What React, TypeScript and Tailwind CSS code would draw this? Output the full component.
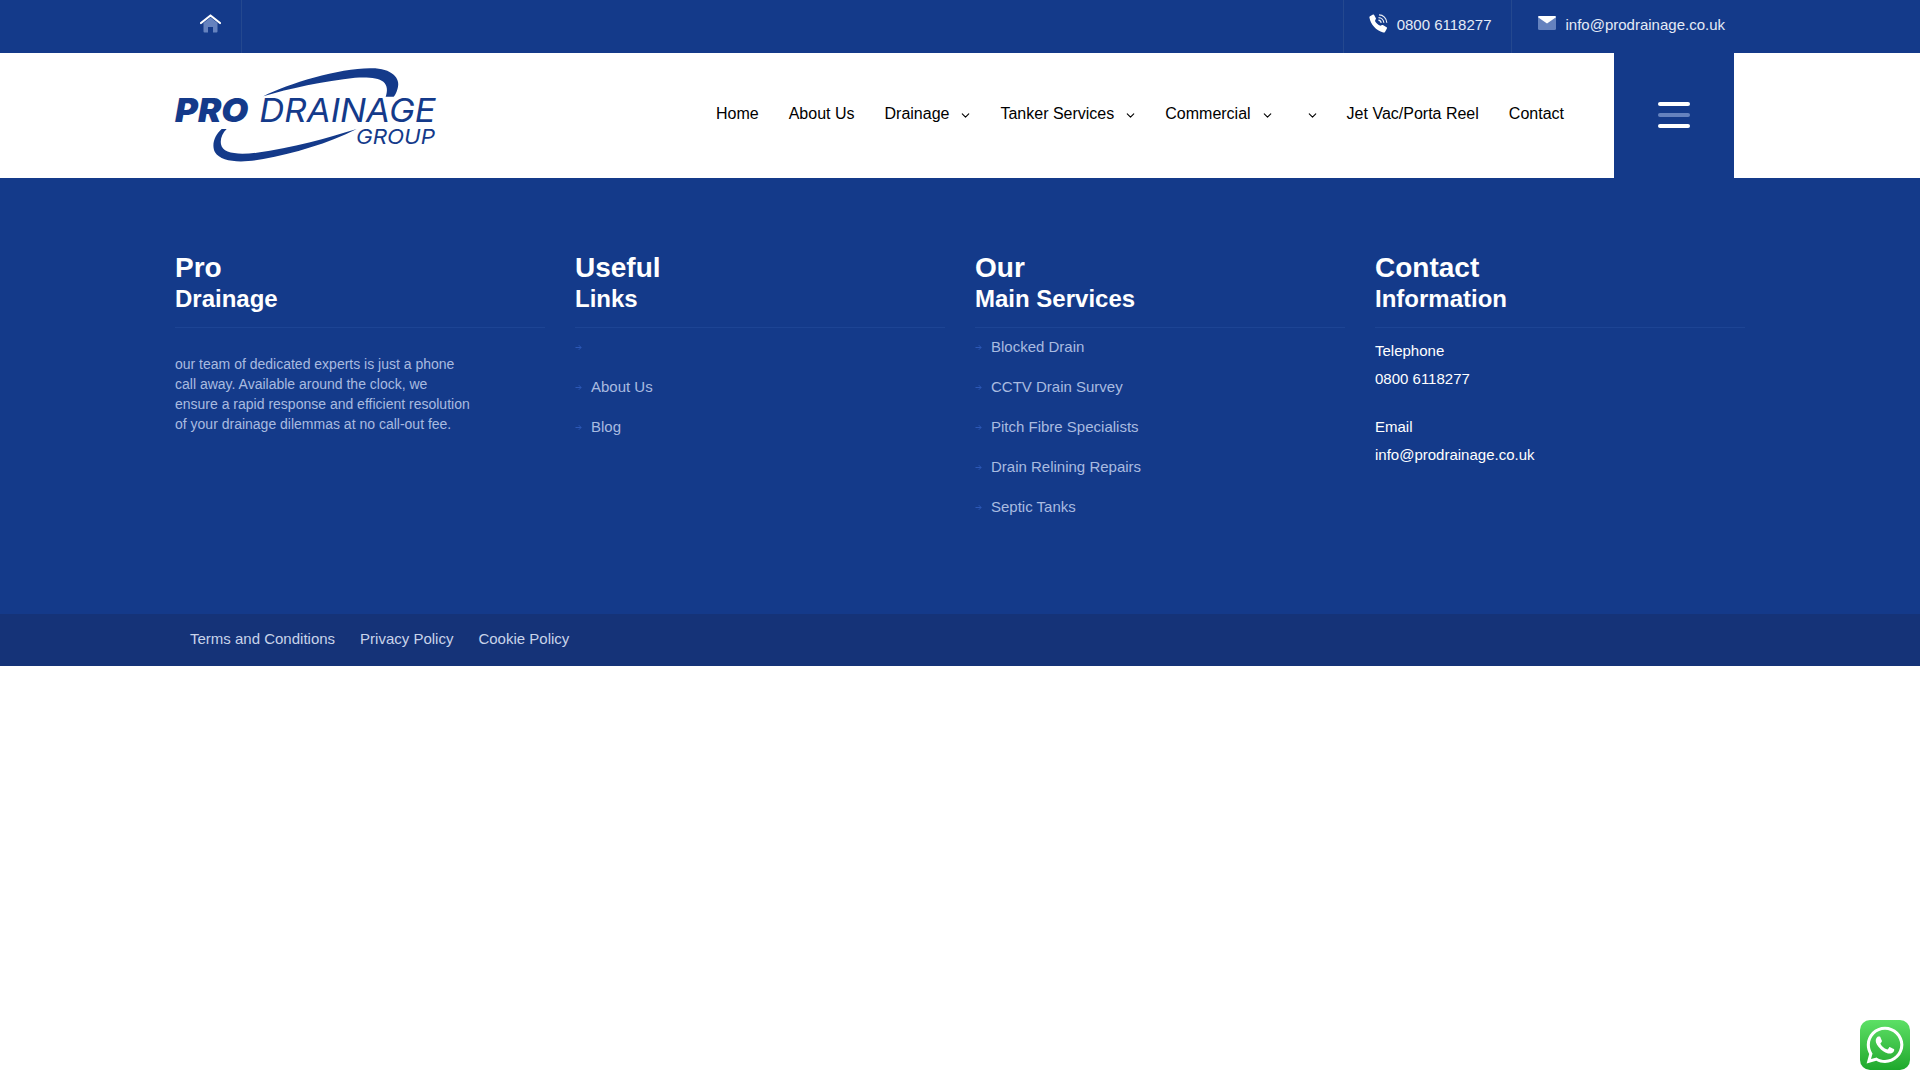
import { ChevronDown } from 'lucide-react';
import { FaWhatsapp } from 'react-icons/fa';

const NAV = [
  { label: 'Home', drop: false },
  { label: 'About Us', drop: false },
  { label: 'Drainage', drop: true },
  { label: 'Tanker Services', drop: true },
  { label: 'Commercial', drop: true },
  { label: '', drop: true },
  { label: 'Jet Vac/Porta Reel', drop: false },
  { label: 'Contact', drop: false },
];

const USEFUL = ['', 'About Us', 'Blog'];
const SERVICES = ['Blocked Drain', 'CCTV Drain Survey', 'Pitch Fibre Specialists', 'Drain Relining Repairs', 'Septic Tanks'];
const LEGAL = ['Terms and Conditions', 'Privacy Policy', 'Cookie Policy'];

function HomeIcon() {
  return (
    <svg width="21" height="19" viewBox="0 0 21 19" className="block">
      <path d="M3.5 9 L10.5 3.5 L17.5 9 V17.5 a1 1 0 0 1 -1 1 H13 V13 H8 V18.5 H4.5 a1 1 0 0 1 -1 -1 Z" fill="#6582be" />
      <path d="M1 9 L10.5 1.5 L20 9" fill="none" stroke="#fff" strokeWidth="2.2" strokeLinecap="round" strokeLinejoin="round" />
    </svg>
  );
}

function PhoneIcon() {
  return (
    <svg width="19" height="19" viewBox="0 0 19 19" className="block">
      <path d="M1 2.2 L4 .6 C4.7 .3 5 .6 5.3 1.2 L6.9 4.2 C7.1 4.8 7 5.2 6.5 5.6 L6 7 C7 9 9 11 11.5 11.8 L12.5 11.2 C13 10.8 13.4 10.8 13.9 11.1 L17.6 13.2 C18.1 13.6 18.2 14 17.9 14.6 L16 17.9 C15.6 18.5 15 18.6 14.2 18.4 C7 16.6 1.6 10.5 .4 3.6 C.3 3 .5 2.5 1 2.2 Z" fill="#fff" />
      <path d="M9.5 3.6 C12.4 3.6 14.6 5.8 14.8 8.8 M10 .9 C14.2 .9 17.6 4.3 17.8 8.8 M9.4 6.2 C10.9 6.4 12 7.4 12.2 8.9" fill="none" stroke="#fff" strokeWidth="1.2" strokeOpacity="0.9" />
    </svg>
  );
}

function MailIcon() {
  return (
    <svg width="18" height="14" viewBox="0 0 18 14" className="block">
      <rect x="0" y="0" width="18" height="14" rx="1.5" fill="#6582be" />
      <path d="M0 1.2 A1.2 1.2 0 0 1 1.2 0 H16.8 A1.2 1.2 0 0 1 18 1.2 L9 7.4 Z" fill="#fff" />
    </svg>
  );
}

function ArrowIcon() {
  return (
    <svg width="7" height="7" viewBox="0 0 7 7" className="block shrink-0">
      <path d="M.5 3.5 H6 M3.8 1.2 L6.1 3.5 L3.8 5.8" fill="none" stroke="#2c58b6" strokeWidth="1" />
    </svg>
  );
}

function Logo() {
  return (
    <svg width="285" height="115" viewBox="0 0 855 345" className="block shrink-0">
      <path d="M295 124 C370 85 530 38 620 40 C680 40 708 70 698 100 C695 112 691 120 686 125 L662 125 C668 108 668 92 655 80 C640 68 610 66 570 68 C480 78 370 100 295 124 Z" fill="#143a8a" />
      <path d="M185 222 L170 222 C150 240 138 268 150 292 C168 322 230 325 295 312 C385 296 490 265 575 222 C490 248 380 280 275 293 C220 300 172 296 168 268 C165 250 172 235 185 222 Z" fill="#143a8a" />
      <text x="30" y="200" textLength="220" lengthAdjust="spacingAndGlyphs" fontFamily="Inter, sans-serif" fontStyle="italic" fontWeight="900" fontSize="98" fill="#143a8a">PRO</text>
      <text x="283" y="200" textLength="529" lengthAdjust="spacingAndGlyphs" fontFamily="Inter, sans-serif" fontStyle="italic" fontWeight="400" fontSize="98" fill="#143a8a">DRAINAGE</text>
      <text x="573" y="267" textLength="237" lengthAdjust="spacingAndGlyphs" fontFamily="Inter, sans-serif" fontStyle="italic" fontWeight="400" fontSize="62" fill="#143a8a">GROUP</text>
    </svg>
  );
}

function ColumnTitle({ top, bottom }: { top: string; bottom: string }) {
  return (
    <div className="h-[76px] border-b border-[#1d4494] text-white font-bold">
      <div className="text-[28px] leading-[32px]">{top}</div>
      <div className="text-[24px] leading-[30px]">{bottom}</div>
    </div>
  );
}

function LinkList({ items }: { items: string[] }) {
  return (
    <ul className="-mt-px">
      {items.map((item, i) => (
        <li key={i} className="flex h-10 items-center gap-[9px] text-[15px] text-[#a9bbe0]">
          <ArrowIcon />
          <span>{item}</span>
        </li>
      ))}
    </ul>
  );
}

export default function App() {
  return (
    <div className="min-h-[1080px] bg-white font-['Liberation_Sans',Arial,sans-serif]">
      <div className="flex h-[53px] bg-[#143a8a] text-[15px] text-[#e4eaf6]">
        <div className="flex w-[242px] justify-end border-r border-[#24488f] pr-5 pt-[14px]">
          <HomeIcon />
        </div>
        <div className="ml-auto flex">
          <div className="flex items-center gap-[9px] border-l border-[#24488f] pb-[2px] pl-[25px] pr-[19px]">
            <span className="-mt-[5px]"><PhoneIcon /></span>
            <span>0800 6118277</span>
          </div>
          <div className="mr-[195px] flex items-center gap-[10px] border-l border-[#24488f] pb-[2px] pl-[26px]">
            <span className="-mt-[5px]"><MailIcon /></span>
            <span>info@prodrainage.co.uk</span>
          </div>
        </div>
      </div>

      <header className="flex h-[125px] items-stretch pl-[165px]">
        <div className="mt-[2px]"><Logo /></div>
        <nav className="ml-[266px] flex items-center gap-[30px] pb-[4px] text-[16px] text-black">
          {NAV.map((item, i) => (
            <div key={i} className="flex items-center">
              {item.label && <span>{item.label}</span>}
              {item.drop && (
                <ChevronDown
                  size={13}
                  strokeWidth={2}
                  className={item.label ? 'ml-[10px] mr-[-2px] mt-[3px]' : 'ml-[4px] mr-[-2px] mt-[3px]'}
                />
              )}
            </div>
          ))}
        </nav>
        <div className="ml-[50px] flex w-[120px] flex-col items-center justify-center gap-[7px] bg-[#143a8a] pb-[2px]">
          <span className="h-[4px] w-[32px] rounded-full bg-white" />
          <span className="h-[4px] w-[32px] rounded-full bg-[#6582be]" />
          <span className="h-[4px] w-[32px] rounded-full bg-white" />
        </div>
      </header>

      <footer className="h-[436px] bg-[#143a8a] pl-[175px] pt-[74px]">
        <div className="grid w-[1600px] grid-cols-[370px_370px_370px_370px] gap-x-[30px]">
          <div>
            <ColumnTitle top="Pro" bottom="Drainage" />
            <p className="mt-[26px] w-[299px] text-[14px] leading-[20px] text-[#a9bbe0]">
              our team of dedicated experts is just a phone call away. Available around the clock, we ensure a rapid response and efficient resolution of your drainage dilemmas at no call-out fee.
            </p>
          </div>
          <div>
            <ColumnTitle top="Useful" bottom="Links" />
            <LinkList items={USEFUL} />
          </div>
          <div>
            <ColumnTitle top="Our" bottom="Main Services" />
            <LinkList items={SERVICES} />
          </div>
          <div>
            <ColumnTitle top="Contact" bottom="Information" />
            <div className="mt-[9px] text-[15px] leading-[28px] text-white">
              <div>Telephone</div>
              <div>0800 6118277</div>
              <div className="mt-[20px]">Email</div>
              <div>info@prodrainage.co.uk</div>
            </div>
          </div>
        </div>
      </footer>

      <div className="flex h-[52px] items-center gap-[25px] bg-[#153378] pb-[2px] pl-[190px] text-[15px] text-[#c8d3ea]">
        {LEGAL.map((l) => (
          <span key={l}>{l}</span>
        ))}
      </div>

      <div className="fixed left-[1860px] top-[1020px] flex h-[50px] w-[50px] items-center justify-center rounded-[10px] bg-gradient-to-b from-[#5ce065] to-[#1da82c]">
        <FaWhatsapp size={42} color="#fff" />
      </div>
    </div>
  );
}
